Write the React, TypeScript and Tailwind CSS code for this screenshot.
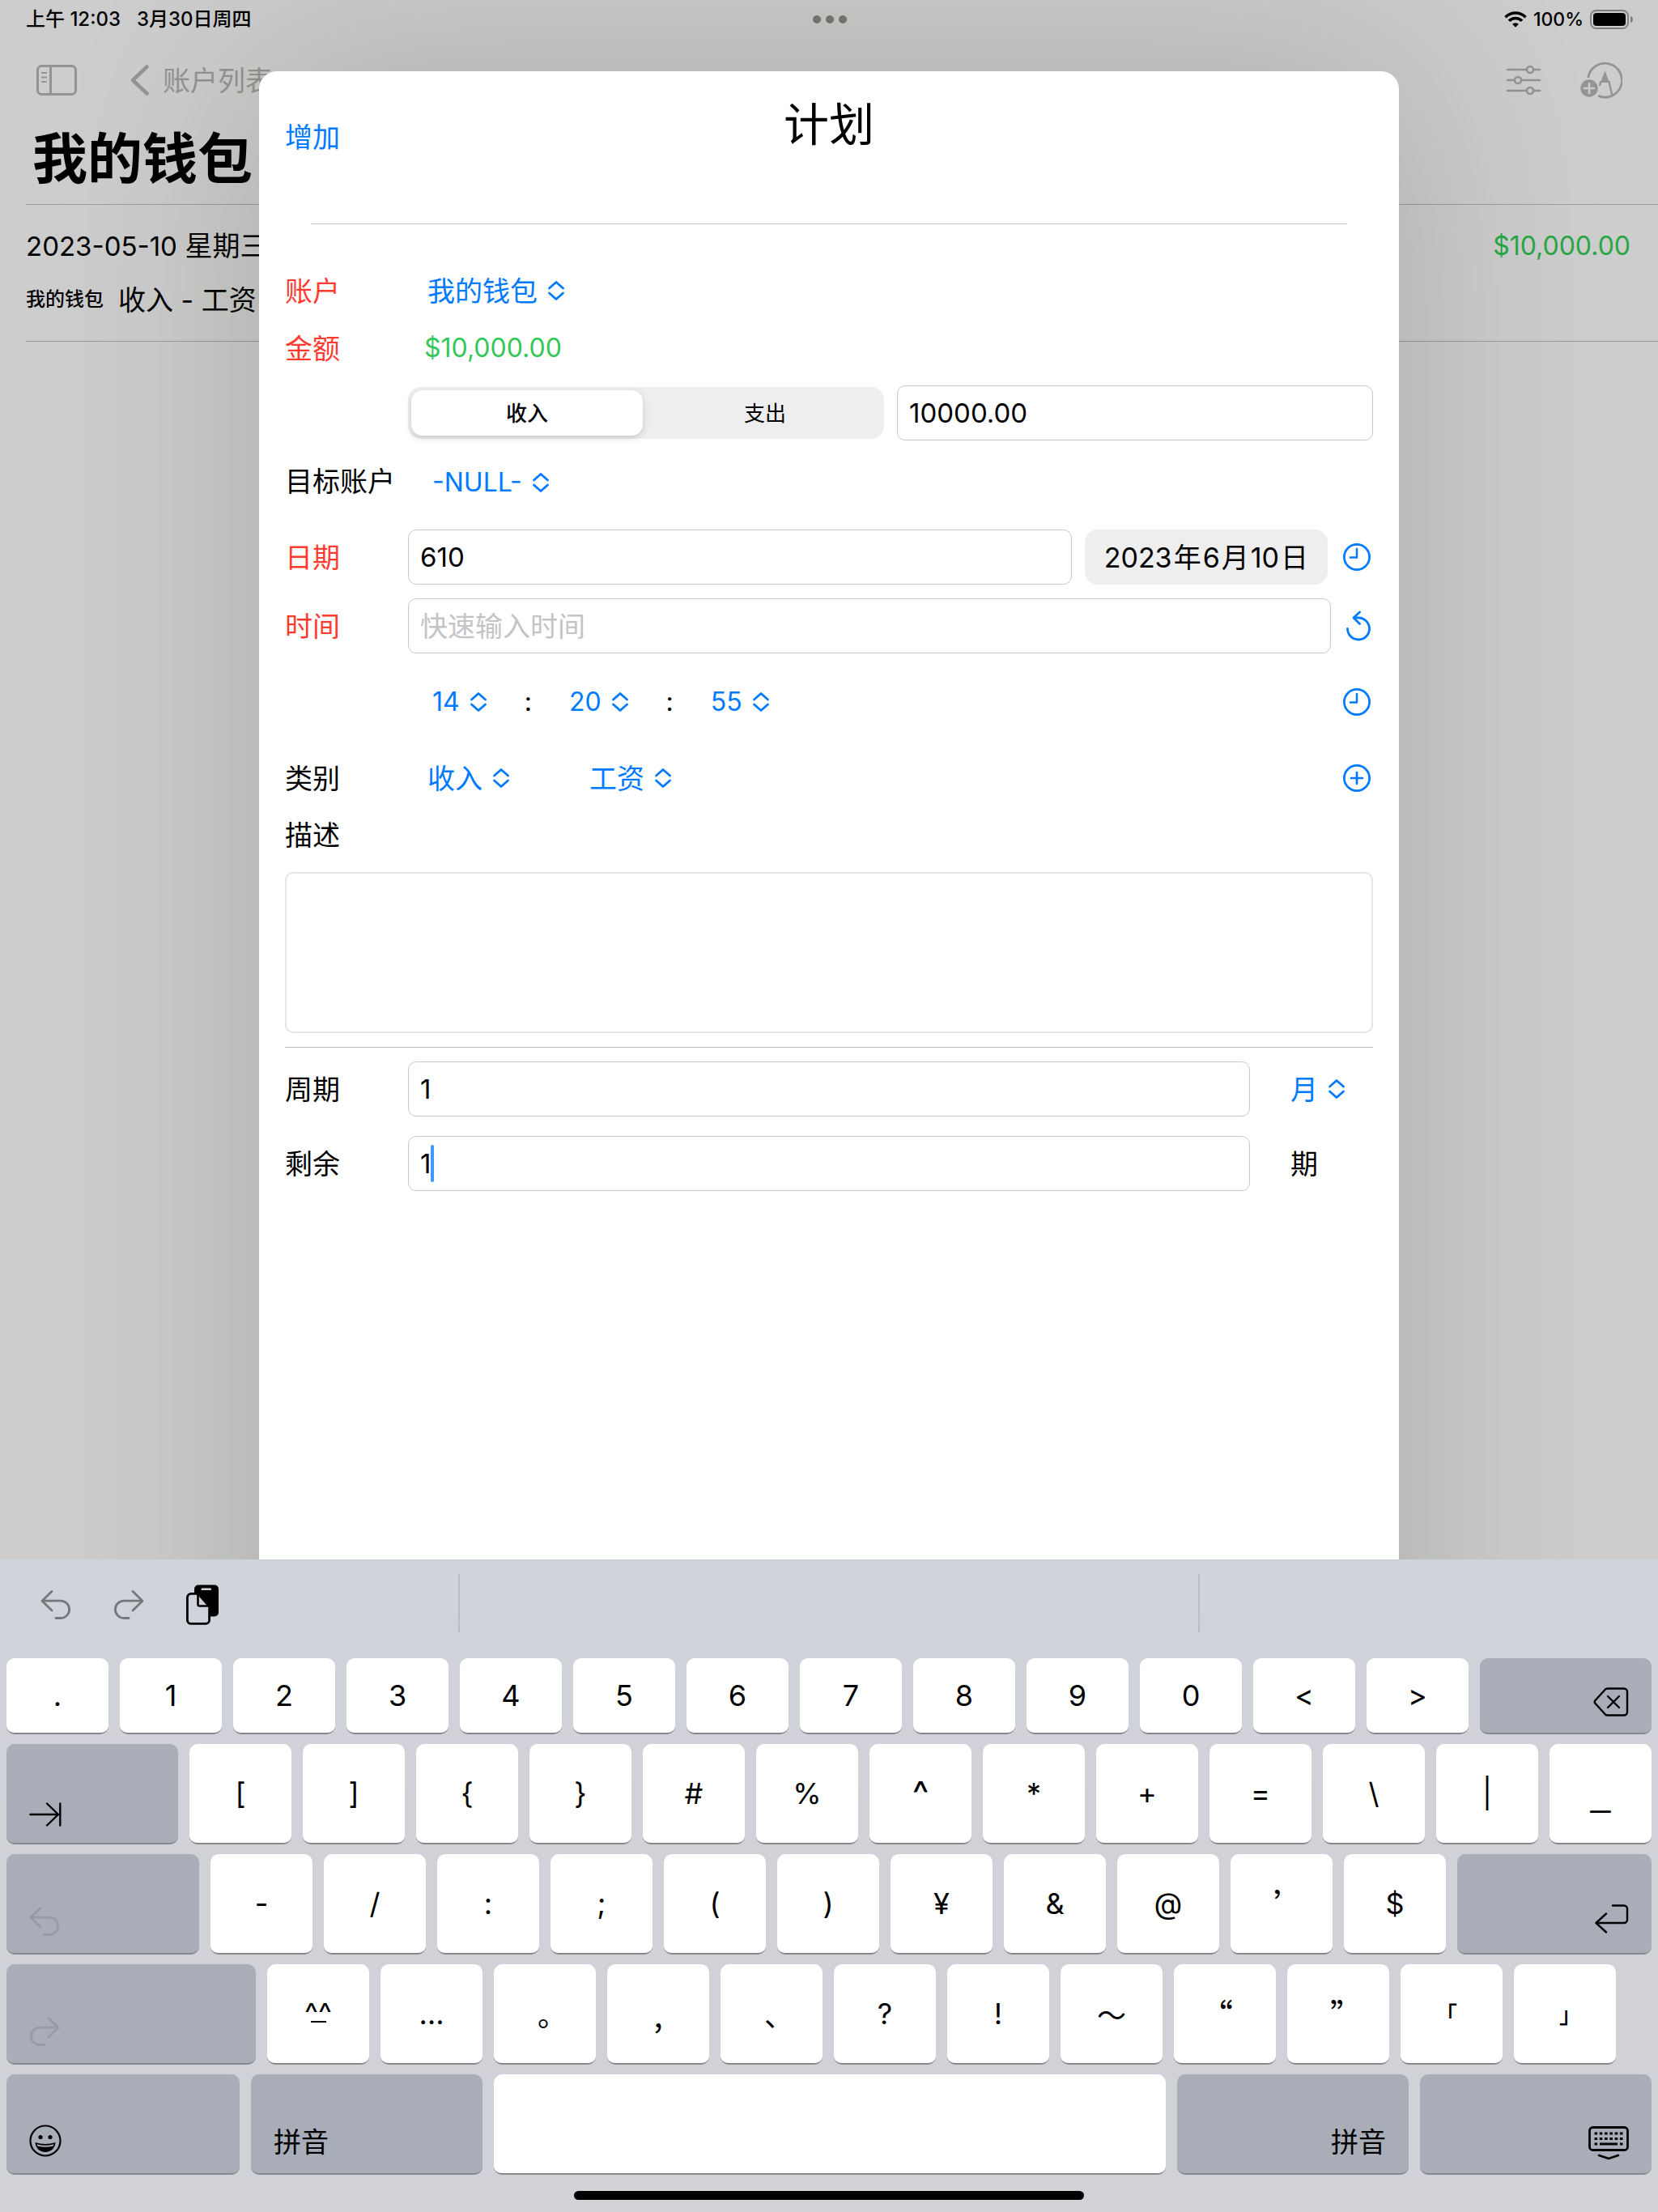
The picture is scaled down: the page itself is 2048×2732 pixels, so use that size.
import type { ReactNode } from 'react';

const sans = "font-['Inter','Noto_Sans_CJK_SC',sans-serif]";

/* ---------- icons ---------- */

function SidebarIcon() {
  return (
    <svg width="50" height="38" viewBox="0 0 50 38" fill="none" stroke="currentColor" strokeWidth="3" strokeLinecap="round">
      <rect x="1.5" y="1.5" width="47" height="35" rx="5" />
      <path d="M17.500 2v34" strokeLinecap="butt" />
      <path d="M7 10h5M7 15.500h5M7 21h5" strokeWidth="2.200" />
    </svg>
  );
}

function BackIcon() {
  return (
    <svg width="24" height="38" viewBox="0 0 24 38" fill="none" stroke="currentColor" strokeWidth="4.500" strokeLinecap="round" strokeLinejoin="round">
      <path d="M20.500 2.500L3 19l17.500 16.500" />
    </svg>
  );
}

function SlidersIcon() {
  return (
    <svg width="44" height="38" viewBox="0 0 44 38" fill="none" stroke="currentColor" strokeWidth="2.600" strokeLinecap="round">
      <path d="M2 6h23M35 6h7M2 19h8M20 19h22M2 32h23M35 32h7" />
      <circle cx="30" cy="6" r="4" />
      <circle cx="15" cy="19" r="4" />
      <circle cx="30" cy="32" r="4" />
    </svg>
  );
}

function MarkupAddIcon() {
  return (
    <svg width="52" height="46" viewBox="0 0 52 46" fill="none">
      <path d="M9.700 20A21 21 0 1 1 22 42.400" stroke="currentColor" strokeWidth="2.800" />
      <path d="M30.500 11.500l5.500 14.500h-11z" fill="currentColor" />
      <path d="M25.500 24l-1.500 6M35.200 24l4 17" stroke="currentColor" strokeWidth="2.400" />
      <circle cx="11" cy="33" r="10.700" fill="currentColor" />
      <path d="M11 27v12M5 33h12" stroke="#cacaca" strokeWidth="2.600" strokeLinecap="round" />
    </svg>
  );
}

function WifiIcon() {
  return (
    <svg width="28" height="20" viewBox="0 0 28 20" fill="none" stroke="currentColor" strokeWidth="3.600">
      <path d="M1.500 7.200a17.800 17.800 0 0 1 25 0" />
      <path d="M6 11.800a11.400 11.400 0 0 1 16 0" />
      <path d="M14 19.800l-3.900-4a5.600 5.600 0 0 1 7.800 0z" fill="currentColor" stroke="none" />
    </svg>
  );
}

function BatteryIcon() {
  return (
    <svg width="54" height="24" viewBox="0 0 54 24">
      <rect x="1" y="1" width="46" height="22" rx="6.500" fill="none" stroke="#7d7d7d" strokeWidth="1.800" />
      <rect x="4" y="4" width="40" height="16" rx="4" fill="#000" />
      <path d="M50 8c2.500 1 3 2.500 3 4s-.5 3-3 4z" fill="#7d7d7d" />
    </svg>
  );
}

function UpDownIcon() {
  return (
    <svg width="22" height="26" viewBox="0 0 22 26" fill="none" stroke="currentColor" strokeWidth="2.800" strokeLinecap="round" strokeLinejoin="round" className="pointer-events-none shrink-0">
      <path d="M2.500 10L11 2.500 19.500 10M2.500 16l8.500 7.500L19.500 16" />
    </svg>
  );
}

function ClockIcon() {
  return (
    <svg width="36" height="36" viewBox="0 0 36 36" fill="none" stroke="currentColor" strokeWidth="2.700" strokeLinecap="round" strokeLinejoin="round">
      <circle cx="18" cy="18" r="15.600" />
      <path d="M18 8v10.500h-8" strokeWidth="2.500" />
    </svg>
  );
}

function PlusCircleIcon() {
  return (
    <svg width="36" height="36" viewBox="0 0 36 36" fill="none" stroke="currentColor" strokeWidth="2.700" strokeLinecap="round">
      <circle cx="18" cy="18" r="15.600" />
      <path d="M18 11v14M11 18h14" />
    </svg>
  );
}

function ResetIcon() {
  return (
    <svg width="36" height="38" viewBox="0 0 36 38" fill="none" stroke="currentColor" strokeWidth="2.800" strokeLinecap="round" strokeLinejoin="round">
      <path d="M6.500 22.500A13.500 13.500 0 1 0 20 9h-5.500" />
      <path d="M21.500 2l-7.500 7 7.500 7.500" />
    </svg>
  );
}

function UndoIcon() {
  return (
    <svg width="38" height="38" viewBox="0 0 38 38" fill="none" stroke="currentColor" strokeWidth="2.800" strokeLinecap="round" strokeLinejoin="round">
      <path d="M14 2.500L2 14.200l12 11.700" />
      <path d="M2.500 14.200h22.500a10.600 10.600 0 0 1 0 21.300h-6" />
    </svg>
  );
}

function RedoIcon() {
  return (
    <svg width="38" height="38" viewBox="0 0 38 38" fill="none" stroke="currentColor" strokeWidth="2.800" strokeLinecap="round" strokeLinejoin="round">
      <path d="M24 2.500l12 11.700-12 11.700" />
      <path d="M35.500 14.200H13a10.600 10.600 0 0 0 0 21.300h6" />
    </svg>
  );
}

function PasteIcon() {
  return (
    <svg width="40" height="50" viewBox="0 0 40 50">
      <rect x="10" y="0.500" width="30" height="39" rx="5" fill="#000" />
      <rect x="18.500" y="4.500" width="12.500" height="2.600" rx="1.200" fill="#cfd2da" />
      <path d="M6 11.400h8.600L28.600 27v17a4.400 4.400 0 0 1-4.400 4.400H6A4.400 4.400 0 0 1 1.400 44V16A4.600 4.600 0 0 1 6 11.400z" fill="#cfd2da" stroke="#000" strokeWidth="2.800" strokeLinejoin="round" />
      <path d="M14.500 12v12.500a2 2 0 0 0 2 2H28" fill="none" stroke="#000" strokeWidth="2.600" />
    </svg>
  );
}

function BackspaceIcon() {
  return (
    <svg width="44" height="36" viewBox="0 0 44 36" fill="none" stroke="currentColor" strokeWidth="2.400" strokeLinecap="round" strokeLinejoin="round">
      <path d="M17.500 1.500H38a4 4 0 0 1 4 4v25a4 4 0 0 1-4 4H17.500a4 4 0 0 1-2.800-1.200L2.600 20a3 3 0 0 1 0-4L14.700 2.700a4 4 0 0 1 2.800-1.200z" />
      <path d="M18 11l14 14M32 11L18 25" />
    </svg>
  );
}

function TabIcon() {
  return (
    <svg width="40" height="30" viewBox="0 0 40 30" fill="none" stroke="currentColor" strokeWidth="2.400" strokeLinecap="round" strokeLinejoin="round">
      <path d="M1.500 15H36M22 1.500L36 15 22 28.500M38.300 1.500v27" />
    </svg>
  );
}

function ReturnIcon() {
  return (
    <svg width="42" height="40" viewBox="0 0 42 40" fill="none" stroke="currentColor" strokeWidth="2.400" strokeLinecap="round" strokeLinejoin="round">
      <path d="M22 1.500h14a4 4 0 0 1 4 4v13.500a4 4 0 0 1-4 4H2" />
      <path d="M14 11.500L1.500 23 14 34.500" />
    </svg>
  );
}

function EmojiIcon() {
  return (
    <svg width="40" height="40" viewBox="0 0 40 40" fill="none" stroke="currentColor" strokeWidth="2.200">
      <circle cx="20" cy="20" r="18.500" />
      <circle cx="14" cy="15.500" r="2.600" fill="currentColor" stroke="none" />
      <circle cx="26" cy="15.500" r="2.600" fill="currentColor" stroke="none" />
      <path d="M7.500 22c8 2.600 17 2.600 25 0-.4 7-5.500 12-12.500 12S7.900 29 7.500 22z" fill="currentColor" stroke="none" />
      <path d="M9.500 24.300c7 2 14 2 21 0l-.8 2.200c-6.500 1.800-13 1.800-19.400 0z" fill="#a9adb8" stroke="none" />
    </svg>
  );
}

function HideKeyboardIcon() {
  return (
    <svg width="50" height="38" viewBox="0 0 50 38" fill="none" stroke="currentColor" className="overflow-visible">
      <rect x="1.500" y="1.500" width="47" height="28" rx="4" strokeWidth="2.800" />
      <path d="M7.500 9h35M7.500 15.500h35" strokeWidth="3.200" strokeDasharray="3.600 2.680" />
      <path d="M7.500 22h3.600M14 22h22M38.900 22h3.600" strokeWidth="3" />
      <path d="M13 36l12 4 12-4" strokeWidth="2.600" strokeLinecap="round" strokeLinejoin="round" />
    </svg>
  );
}

/* ---------- form parts ---------- */

function Picker({ label, value, latin }: { label: string; value: string; latin?: boolean }) {
  return (
    <span className="inline-flex items-center gap-3 text-[#007aff]">
      <select
        aria-label={label}
        defaultValue={value}
        className={`field-sizing-content appearance-none bg-transparent outline-none ${latin ? 'text-[32px]' : 'text-[34px]'}`}
      >
        <option>{value}</option>
      </select>
      <UpDownIcon />
    </span>
  );
}

function TextBox({ id, value, placeholder }: { id: string; value?: string; placeholder?: string }) {
  return (
    <input
      id={id}
      type="text"
      defaultValue={value}
      placeholder={placeholder}
      className={`h-[68px] w-full min-w-0 rounded-[10px] border border-[#c9c9cb] bg-white px-[14px] text-black outline-none placeholder:text-[#c4c4c6] ${placeholder ? 'text-[34px]' : 'text-[33px]'}`}
    />
  );
}

function Row({ label, htmlFor, required, className, children }: { label?: string; htmlFor?: string; required?: boolean; className: string; children?: ReactNode }) {
  const tone = required ? 'text-[#ff3b30]' : 'text-black';
  return (
    <div className={`flex items-center ${className}`}>
      {htmlFor ? (
        <label htmlFor={htmlFor} className={`w-[152px] shrink-0 whitespace-nowrap ${tone}`}>{label}</label>
      ) : (
        <span className={`w-[152px] shrink-0 whitespace-nowrap ${tone}`}>{label}</span>
      )}
      <div className="flex min-w-0 flex-1 items-center">{children}</div>
    </div>
  );
}

function IconButton({ label, children }: { label: string; children: ReactNode }) {
  return (
    <button type="button" aria-label={label} className="flex w-10 shrink-0 items-center justify-center text-[#007aff]">
      {children}
    </button>
  );
}

function PlanSheet() {
  return (
    <section role="dialog" aria-label="计划" className="col-start-1 row-start-1 mx-auto mt-[88px] -mb-80 w-11/16 rounded-t-[22px] bg-white shadow-[0_0_320px_rgba(25,40,10,0.2)]">
      <header className="mx-8 grid h-[188px] grid-cols-[1fr_auto_1fr] items-start">
        <button type="button" className="mt-[57px] justify-self-start leading-[50px] text-[#007aff]">增加</button>
        <h1 className="mt-[30px] text-[56px] leading-[72px]">计划</h1>
      </header>
      <div className="mx-16 h-px bg-[#c2c2c4]" />
      <form className="mx-8 pb-10">
        <Row label="账户" required className="mt-[58px] h-12">
          <div className="pl-6"><Picker label="账户" value="我的钱包" /></div>
        </Row>
        <Row label="金额" htmlFor="amount" required className="mt-[23px] h-12">
          <span className="pl-5 text-[32px] text-[#34c759]">$10,000.00</span>
        </Row>
        <Row className="mt-[22px]">
          <div className="grid w-full grid-cols-2 items-center gap-4">
            <div className="grid h-16 grid-cols-2 gap-2 rounded-2xl bg-[#eeeeef] p-1 text-[26px]">
              <button type="button" aria-pressed="true" className="rounded-[14px] bg-white font-medium shadow-[0_3px_8px_rgba(0,0,0,0.16)]">收入</button>
              <button type="button" aria-pressed="false">支出</button>
            </div>
            <TextBox id="amount" value="10000.00" />
          </div>
        </Row>
        <Row label="目标账户" className="mt-[26px] h-12">
          <div className="pl-[30px]"><Picker label="目标账户" value="-NULL-" latin /></div>
        </Row>
        <Row label="日期" htmlFor="date" required className="mt-9">
          <TextBox id="date" value="610" />
          <button type="button" className="mx-4 flex h-[68px] shrink-0 items-center gap-[2px] rounded-2xl bg-[#eeeeef] px-6 whitespace-nowrap">
            <span>2023</span><span>年</span><span>6</span><span>月</span><span>10</span><span>日</span>
          </button>
          <IconButton label="今天"><ClockIcon /></IconButton>
        </Row>
        <Row label="时间" htmlFor="time" required className="mt-[17px]">
          <TextBox id="time" placeholder="快速输入时间" />
          <div className="ml-3"><IconButton label="重置"><ResetIcon /></IconButton></div>
        </Row>
        <Row className="mt-9 h-12">
          <div className="flex flex-1 items-center gap-[46px] pl-[30px]">
            <Picker label="时" value="14" latin />
            <span className="text-[32px]">:</span>
            <Picker label="分" value="20" latin />
            <span className="text-[32px]">:</span>
            <Picker label="秒" value="55" latin />
          </div>
          <IconButton label="现在"><ClockIcon /></IconButton>
        </Row>
        <Row label="类别" className="mt-[46px] h-12">
          <div className="flex flex-1 items-center gap-[98px] pl-6">
            <Picker label="类别" value="收入" />
            <Picker label="子类别" value="工资" />
          </div>
          <IconButton label="添加类别"><PlusCircleIcon /></IconButton>
        </Row>
        <Row label="描述" htmlFor="note" className="mt-[22px] h-12" />
        <textarea id="note" className="mt-[22px] block h-[199px] w-full resize-none rounded-[10px] border-2 border-[#e5e5e5] outline-none" />
        <div className="mt-[17px] h-px bg-[#c2c2c4]" />
        <Row label="周期" htmlFor="period" className="mt-[17px]">
          <TextBox id="period" value="1" />
          <div className="w-[152px] shrink-0 pl-[50px]"><Picker label="周期单位" value="月" /></div>
        </Row>
        <Row label="剩余" htmlFor="remaining" className="mt-6">
          <div className="relative flex w-full min-w-0 items-center">
            <TextBox id="remaining" value="1" />
            <span className="absolute left-7 h-[46px] w-1 rounded-full bg-[#3f97ff]" />
          </div>
          <span className="w-[152px] shrink-0 pl-[50px]">期</span>
        </Row>
      </form>
    </section>
  );
}

/* ---------- page behind the sheet ---------- */

function WalletPage() {
  return (
    <div className="col-start-1 row-start-1">
      <div className="grid h-12 grid-cols-[1fr_auto_1fr] items-center pr-[30px] pl-8 text-[24px] font-medium">
        <div className="flex gap-5"><span>上午 12:03</span><span>3月30日周四</span></div>
        <div className="flex gap-[6px]">
          <i className="size-[10px] rounded-full bg-[#757874]" />
          <i className="size-[10px] rounded-full bg-[#757874]" />
          <i className="size-[10px] rounded-full bg-[#757874]" />
        </div>
        <div className="flex items-center justify-end gap-2">
          <WifiIcon />
          <span className="text-[23px]">100%</span>
          <BatteryIcon />
        </div>
      </div>
      <nav className="flex h-[102px] items-center pr-11 pl-[45px] text-[#949494]">
        <button type="button" aria-label="边栏"><SidebarIcon /></button>
        <a href="#accounts" className="ml-[66px] flex items-center gap-4"><BackIcon />账户列表</a>
        <div className="ml-auto flex items-center gap-12">
          <button type="button" aria-label="筛选"><SlidersIcon /></button>
          <button type="button" aria-label="新增"><MarkupAddIcon /></button>
        </div>
      </nav>
      <h2 className="h-[102px] pl-10 text-[68px] leading-[92px] font-bold">我的钱包</h2>
      <div className="ml-8 border-y border-[#9b9b9b] pr-[34px]">
        <div className="mt-[26px] flex h-[50px] items-center justify-between">
          <span><span className="text-[33px]">2023-05-10</span> 星期三</span>
          <span className="text-[32px] text-[#28a745]">$10,000.00</span>
        </div>
        <div className="mt-4 mb-[26px] flex h-[50px] items-center gap-[18px]">
          <span className="text-[24px] font-medium">我的钱包</span>
          <span>收入 - 工资</span>
        </div>
      </div>
    </div>
  );
}

/* ---------- keyboard ---------- */

const keyBase = 'min-w-0 rounded-[10px] border-b-2 border-[#88898d] leading-none';

const keyFonts: Record<string, string> = {
  '。': "text-[36px] font-['Noto_Sans_CJK_SC',sans-serif] [font-feature-settings:'halt']",
  '、': "text-[36px] font-['Noto_Sans_CJK_SC',sans-serif] [font-feature-settings:'halt']",
  '～': "text-[36px] font-['Noto_Sans_CJK_SC',sans-serif]",
  '「': "text-[28px] font-medium font-['Noto_Sans_CJK_SC',sans-serif] [font-feature-settings:'halt']",
  '」': "text-[28px] font-medium font-['Noto_Sans_CJK_SC',sans-serif] [font-feature-settings:'halt']",
  ',': "text-[40px] font-['Noto_Sans_CJK_SC',sans-serif]",
  '’': "text-[40px] font-['Noto_Sans_CJK_SC',sans-serif] [font-feature-settings:'halt']",
  '“': "text-[40px] font-['Noto_Sans_CJK_SC',sans-serif] [font-feature-settings:'halt']",
  '”': "text-[40px] font-['Noto_Sans_CJK_SC',sans-serif] [font-feature-settings:'halt']",
  '^': 'text-[44px]',
  _: "text-[44px] font-['Liberation_Sans',sans-serif]",
};

function CharKey({ char }: { char: string }) {
  return (
    <button type="button" className={`${keyBase} flex-[126_1_0px] bg-white ${keyFonts[char] ?? 'text-[36px]'}`}>
      {char}
    </button>
  );
}

function KaomojiKey() {
  return (
    <button type="button" aria-label="^_^" className={`${keyBase} flex flex-[126_1_0px] flex-col items-center justify-center bg-white pb-2`}>
      <span className="h-6 text-[36px] leading-9">^^</span>
      <span className="mt-1 h-[2px] w-[19px] bg-black" />
    </button>
  );
}

function FnKey({ label, grow, end, faded, children }: { label: string; grow: string; end?: boolean; faded?: boolean; children: ReactNode }) {
  return (
    <button
      type="button"
      aria-label={label}
      className={`${keyBase} bg-[#a9adb8] ${grow} ${faded ? 'text-[#989ba6]' : 'text-black'}`}
    >
      <span className={`flex h-full items-end px-7 pb-5 ${end ? 'justify-end' : 'justify-start'}`}>{children}</span>
    </button>
  );
}

function Keys({ chars }: { chars: string[] }) {
  return <>{chars.map((c) => <CharKey key={c} char={c} />)}</>;
}

function Keyboard() {
  return (
    <footer className="bg-linear-to-b from-[#cfd3da] to-[#d1d2d8] to-40%">
      <div className="grid h-[122px] grid-cols-[566fr_916fr_566fr]">
        <div className="flex items-center gap-[52px] pb-[10px] pl-[50px] text-[#76777b]">
          <button type="button" aria-label="撤销"><UndoIcon /></button>
          <button type="button" aria-label="重做"><RedoIcon /></button>
          <button type="button" aria-label="粘贴"><PasteIcon /></button>
        </div>
        <div className="mt-[18px] mb-8 border-x-2 border-[#bbbec3]" />
      </div>
      <div className="flex flex-col gap-3 px-2">
        <div className="flex h-[94px] gap-[14px]">
          <Keys chars={['.', '1', '2', '3', '4', '5', '6', '7', '8', '9', '0', '<', '>']} />
          <FnKey label="删除" grow="flex-[212_1_0px]" end><BackspaceIcon /></FnKey>
        </div>
        <div className="flex h-[124px] gap-[14px]">
          <FnKey label="制表" grow="flex-[212_1_0px]"><TabIcon /></FnKey>
          <Keys chars={['[', ']', '{', '}', '#', '%', '^', '*', '+', '=', '\\', '|', '_']} />
        </div>
        <div className="flex h-[124px] gap-[14px]">
          <FnKey label="撤销" grow="flex-[238_1_0px]" faded><UndoIcon /></FnKey>
          <Keys chars={['-', '/', ':', ';', '(', ')', '¥', '&', '@', '’', '$']} />
          <FnKey label="换行" grow="flex-[240_1_0px]" end><ReturnIcon /></FnKey>
        </div>
        <div className="flex h-[124px] gap-[14px] pr-11">
          <FnKey label="重做" grow="flex-[308_1_0px]" faded><RedoIcon /></FnKey>
          <KaomojiKey />
          <Keys chars={['…', '。', ',', '、', '?', '!', '～', '“', '”', '「', '」']} />
        </div>
        <div className="flex h-[124px] gap-[14px]">
          <FnKey label="表情符号" grow="flex-[288_1_0px]"><EmojiIcon /></FnKey>
          <FnKey label="拼音" grow="flex-[286_1_0px]"><span className="text-[34px] leading-9">拼音</span></FnKey>
          <button type="button" aria-label="空格" className={`${keyBase} flex-[830_1_0px] bg-white`} />
          <FnKey label="拼音" grow="flex-[286_1_0px]" end><span className="text-[34px] leading-9">拼音</span></FnKey>
          <FnKey label="收起键盘" grow="flex-[286_1_0px]" end><HideKeyboardIcon /></FnKey>
        </div>
      </div>
      <div className="flex h-[46px] items-center justify-center pt-1">
        <div className="h-[11px] w-4/13 rounded-full bg-black" />
      </div>
    </footer>
  );
}

export default function App() {
  return (
    <div lang="zh-CN" className={`flex min-h-screen flex-col bg-[#cdcdcd] text-[34px] text-black ${sans}`}>
      <main className="grid flex-1 overflow-hidden">
        <WalletPage />
        <PlanSheet />
      </main>
      <Keyboard />
    </div>
  );
}
